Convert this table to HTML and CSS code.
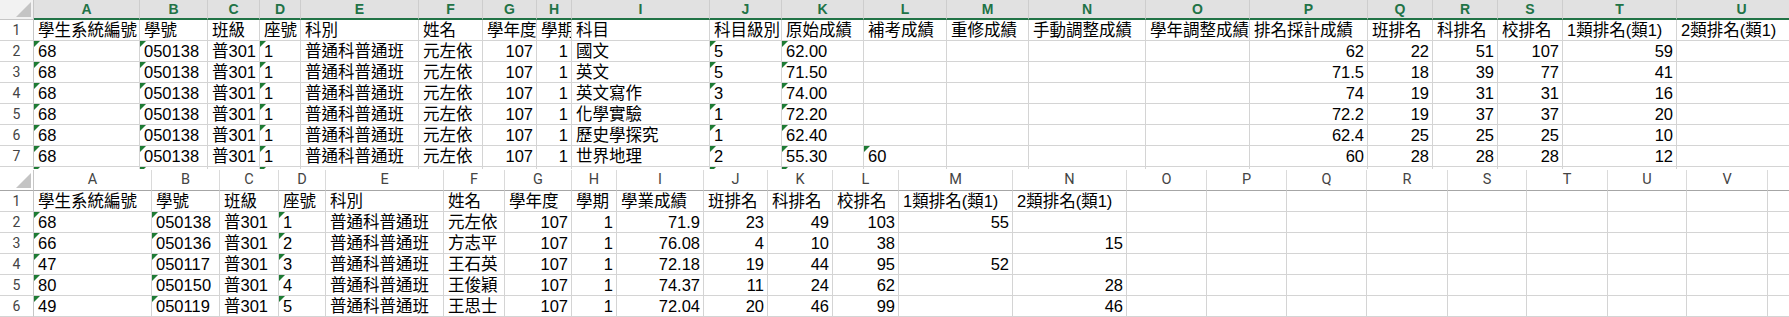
FILE: index.html
```html
<!DOCTYPE html>
<html lang="zh-Hant">
<head>
<meta charset="utf-8">
<title>成績表</title>
<link rel="stylesheet" href="styles.css">
</head>
<body>
<div class="page">
  <section class="sheet sheet-top">
    <div class="corner"></div>
    <div class="ch">A</div><div class="ch">B</div><div class="ch">C</div><div class="ch">D</div><div class="ch">E</div><div class="ch">F</div><div class="ch">G</div><div class="ch">H</div><div class="ch">I</div><div class="ch">J</div><div class="ch">K</div><div class="ch">L</div><div class="ch">M</div><div class="ch">N</div><div class="ch">O</div><div class="ch">P</div><div class="ch">Q</div><div class="ch">R</div><div class="ch">S</div><div class="ch">T</div><div class="ch">U</div>

    <div class="rh">1</div><div class="c">學生系統編號</div><div class="c">學號</div><div class="c">班級</div><div class="c">座號</div><div class="c">科別</div><div class="c">姓名</div><div class="c">學年度</div><div class="c">學期</div><div class="c">科目</div><div class="c">科目級別</div><div class="c">原始成績</div><div class="c">補考成績</div><div class="c">重修成績</div><div class="c">手動調整成績</div><div class="c">學年調整成績</div><div class="c">排名採計成績</div><div class="c">班排名</div><div class="c">科排名</div><div class="c">校排名</div><div class="c">1類排名(類1)</div><div class="c">2類排名(類1)</div>

    <div class="rh">2</div><div class="c t">68</div><div class="c t">050138</div><div class="c">普301</div><div class="c t">1</div><div class="c">普通科普通班</div><div class="c">元左依</div><div class="c n">107</div><div class="c n">1</div><div class="c">國文</div><div class="c t">5</div><div class="c t">62.00</div><div class="c"></div><div class="c"></div><div class="c"></div><div class="c"></div><div class="c n">62</div><div class="c n">22</div><div class="c n">51</div><div class="c n">107</div><div class="c n">59</div><div class="c"></div>

    <div class="rh">3</div><div class="c t">68</div><div class="c t">050138</div><div class="c">普301</div><div class="c t">1</div><div class="c">普通科普通班</div><div class="c">元左依</div><div class="c n">107</div><div class="c n">1</div><div class="c">英文</div><div class="c t">5</div><div class="c t">71.50</div><div class="c"></div><div class="c"></div><div class="c"></div><div class="c"></div><div class="c n">71.5</div><div class="c n">18</div><div class="c n">39</div><div class="c n">77</div><div class="c n">41</div><div class="c"></div>

    <div class="rh">4</div><div class="c t">68</div><div class="c t">050138</div><div class="c">普301</div><div class="c t">1</div><div class="c">普通科普通班</div><div class="c">元左依</div><div class="c n">107</div><div class="c n">1</div><div class="c">英文寫作</div><div class="c t">3</div><div class="c t">74.00</div><div class="c"></div><div class="c"></div><div class="c"></div><div class="c"></div><div class="c n">74</div><div class="c n">19</div><div class="c n">31</div><div class="c n">31</div><div class="c n">16</div><div class="c"></div>

    <div class="rh">5</div><div class="c t">68</div><div class="c t">050138</div><div class="c">普301</div><div class="c t">1</div><div class="c">普通科普通班</div><div class="c">元左依</div><div class="c n">107</div><div class="c n">1</div><div class="c">化學實驗</div><div class="c t">1</div><div class="c t">72.20</div><div class="c"></div><div class="c"></div><div class="c"></div><div class="c"></div><div class="c n">72.2</div><div class="c n">19</div><div class="c n">37</div><div class="c n">37</div><div class="c n">20</div><div class="c"></div>

    <div class="rh">6</div><div class="c t">68</div><div class="c t">050138</div><div class="c">普301</div><div class="c t">1</div><div class="c">普通科普通班</div><div class="c">元左依</div><div class="c n">107</div><div class="c n">1</div><div class="c">歷史學探究</div><div class="c t">1</div><div class="c t">62.40</div><div class="c"></div><div class="c"></div><div class="c"></div><div class="c"></div><div class="c n">62.4</div><div class="c n">25</div><div class="c n">25</div><div class="c n">25</div><div class="c n">10</div><div class="c"></div>

    <div class="rh">7</div><div class="c t">68</div><div class="c t">050138</div><div class="c">普301</div><div class="c t">1</div><div class="c">普通科普通班</div><div class="c">元左依</div><div class="c n">107</div><div class="c n">1</div><div class="c">世界地理</div><div class="c t">2</div><div class="c t">55.30</div><div class="c t">60</div><div class="c"></div><div class="c"></div><div class="c"></div><div class="c n">60</div><div class="c n">28</div><div class="c n">28</div><div class="c n">28</div><div class="c n">12</div><div class="c"></div>

    <div class="rh">8</div><div class="c t"></div><div class="c t"></div><div class="c"></div><div class="c t"></div><div class="c"></div><div class="c"></div><div class="c"></div><div class="c"></div><div class="c"></div><div class="c t"></div><div class="c t"></div><div class="c"></div><div class="c"></div><div class="c"></div><div class="c"></div><div class="c"></div><div class="c"></div><div class="c"></div><div class="c"></div><div class="c"></div><div class="c"></div>
  </section>

  <section class="sheet sheet-bottom">
    <div class="corner"></div>
    <div class="ch">A</div><div class="ch">B</div><div class="ch">C</div><div class="ch">D</div><div class="ch">E</div><div class="ch">F</div><div class="ch">G</div><div class="ch">H</div><div class="ch">I</div><div class="ch">J</div><div class="ch">K</div><div class="ch">L</div><div class="ch">M</div><div class="ch">N</div><div class="ch">O</div><div class="ch">P</div><div class="ch">Q</div><div class="ch">R</div><div class="ch">S</div><div class="ch">T</div><div class="ch">U</div><div class="ch">V</div><div class="ch">W</div>

    <div class="rh">1</div><div class="c">學生系統編號</div><div class="c">學號</div><div class="c">班級</div><div class="c">座號</div><div class="c">科別</div><div class="c">姓名</div><div class="c">學年度</div><div class="c">學期</div><div class="c">學業成績</div><div class="c">班排名</div><div class="c">科排名</div><div class="c">校排名</div><div class="c">1類排名(類1)</div><div class="c">2類排名(類1)</div><div class="c"></div><div class="c"></div><div class="c"></div><div class="c"></div><div class="c"></div><div class="c"></div><div class="c"></div><div class="c"></div><div class="c"></div>

    <div class="rh">2</div><div class="c t">68</div><div class="c t">050138</div><div class="c">普301</div><div class="c t">1</div><div class="c">普通科普通班</div><div class="c">元左依</div><div class="c n">107</div><div class="c n">1</div><div class="c n">71.9</div><div class="c n">23</div><div class="c n">49</div><div class="c n">103</div><div class="c n">55</div><div class="c"></div><div class="c"></div><div class="c"></div><div class="c"></div><div class="c"></div><div class="c"></div><div class="c"></div><div class="c"></div><div class="c"></div><div class="c"></div>

    <div class="rh">3</div><div class="c t">66</div><div class="c t">050136</div><div class="c">普301</div><div class="c t">2</div><div class="c">普通科普通班</div><div class="c">方志平</div><div class="c n">107</div><div class="c n">1</div><div class="c n">76.08</div><div class="c n">4</div><div class="c n">10</div><div class="c n">38</div><div class="c"></div><div class="c n">15</div><div class="c"></div><div class="c"></div><div class="c"></div><div class="c"></div><div class="c"></div><div class="c"></div><div class="c"></div><div class="c"></div><div class="c"></div>

    <div class="rh">4</div><div class="c t">47</div><div class="c t">050117</div><div class="c">普301</div><div class="c t">3</div><div class="c">普通科普通班</div><div class="c">王石英</div><div class="c n">107</div><div class="c n">1</div><div class="c n">72.18</div><div class="c n">19</div><div class="c n">44</div><div class="c n">95</div><div class="c n">52</div><div class="c"></div><div class="c"></div><div class="c"></div><div class="c"></div><div class="c"></div><div class="c"></div><div class="c"></div><div class="c"></div><div class="c"></div><div class="c"></div>

    <div class="rh">5</div><div class="c t">80</div><div class="c t">050150</div><div class="c">普301</div><div class="c t">4</div><div class="c">普通科普通班</div><div class="c">王俊穎</div><div class="c n">107</div><div class="c n">1</div><div class="c n">74.37</div><div class="c n">11</div><div class="c n">24</div><div class="c n">62</div><div class="c"></div><div class="c n">28</div><div class="c"></div><div class="c"></div><div class="c"></div><div class="c"></div><div class="c"></div><div class="c"></div><div class="c"></div><div class="c"></div><div class="c"></div>

    <div class="rh">6</div><div class="c t">49</div><div class="c t">050119</div><div class="c">普301</div><div class="c t">5</div><div class="c">普通科普通班</div><div class="c">王思士</div><div class="c n">107</div><div class="c n">1</div><div class="c n">72.04</div><div class="c n">20</div><div class="c n">46</div><div class="c n">99</div><div class="c"></div><div class="c n">46</div><div class="c"></div><div class="c"></div><div class="c"></div><div class="c"></div><div class="c"></div><div class="c"></div><div class="c"></div><div class="c"></div><div class="c"></div>
  </section>
</div>
</body>
</html>
```

FILE: styles.css
```css
* { box-sizing: border-box; }

html, body {
  margin: 0;
  padding: 0;
  background: #ffffff;
}

body {
  width: 1789px;
  height: 317px;
  overflow: hidden;
}

.page {
  display: flex;
  flex-direction: column;
  width: 1789px;
  overflow: hidden;
}

.sheet {
  display: grid;
  grid-auto-rows: 21px;
  width: max-content;
  overflow: hidden;
  font-family: "Liberation Sans", "Noto Sans CJK TC", sans-serif;
  font-size: 16.5px;
  color: #000;
}

.sheet-top {
  grid-template-columns: 34px 106px 68px 52px 41px 118px 64px 54px 35px 138px 72px 82px 83px 82px 117px 104px 118px 65px 65px 65px 114px 130px;
  grid-template-rows: 20px;
  height: 169px;
}

.sheet-bottom {
  grid-template-columns: 34px 118px 68px 59px 47px 118px 61px 67px 45px 87px 64px 65px 66px 114px 114px 80px 80px 80px 81px 79px 81px 79px 81px 80px;
  grid-template-rows: 21px;
  height: 148px;
  margin-top: 1px;
}

.c {
  position: relative;
  border-right: 1px solid #d4d4d4;
  border-bottom: 1px solid #d4d4d4;
  padding: 1px 3px 0 4px;
  line-height: 19px;
  white-space: nowrap;
  overflow: hidden;
}

.c.n { text-align: right; }

.c.t::before {
  content: "";
  position: absolute;
  left: 0;
  top: 0;
  width: 0;
  height: 0;
  border-top: 6px solid #1e7b34;
  border-right: 6px solid transparent;
}

.rh {
  border-right: 1px solid #c6c6c6;
  border-bottom: 1px solid #d4d4d4;
  text-align: center;
  font-family: "Roboto", "Liberation Sans", sans-serif;
  font-size: 14px;
  line-height: 21px;
  color: #444;
}

.corner {
  position: relative;
  border-right: 1px solid #c6c6c6;
}

.corner::after {
  content: "";
  position: absolute;
  right: 2px;
  bottom: 2px;
  width: 0;
  height: 0;
  border-bottom: 15px solid #c4c4c4;
  border-left: 15px solid transparent;
}

.ch {
  text-align: center;
  white-space: nowrap;
  overflow: hidden;
}

/* top sheet: selected columns, Excel desktop look */
.sheet-top .corner {
  background: #f2f2f2;
  border-bottom: 1px solid #c6c6c6;
}

.sheet-top .ch {
  background: #e1e1e1;
  border-right: 1px solid #cdcdcd;
  border-bottom: 2px solid #217346;
  font-family: "Liberation Sans", sans-serif;
  font-weight: bold;
  font-size: 14px;
  line-height: 19px;
  color: #217346;
}

/* bottom sheet: plain header */
.sheet-bottom .corner {
  background: #ffffff;
  border-bottom: 1px solid #a6a6a6;
}

.sheet-bottom .ch {
  background: #ffffff;
  border-right: 1px solid #dadada;
  border-bottom: 1px solid #a6a6a6;
  font-family: "Roboto", "Liberation Sans", sans-serif;
  font-size: 14.5px;
  line-height: 20px;
  color: #444;
}
```
